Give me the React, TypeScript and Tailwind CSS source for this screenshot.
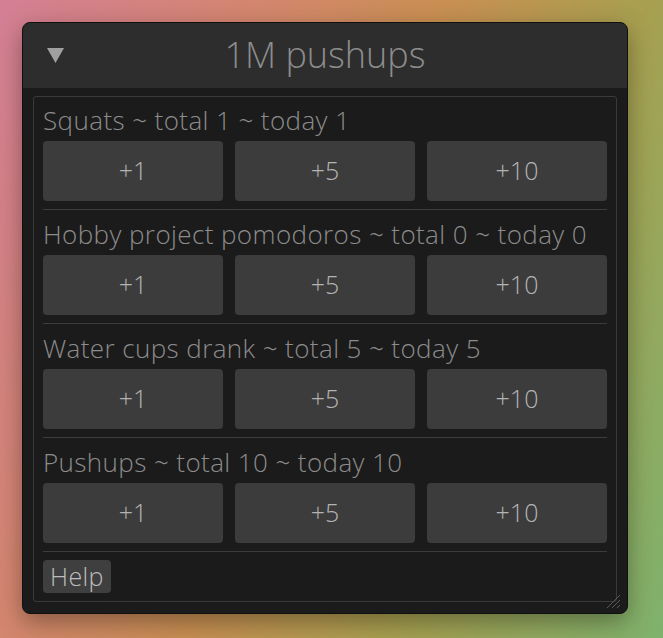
import { Fragment } from 'react';

const counters = [
  { name: 'Squats', total: 1, today: 1 },
  { name: 'Hobby project pomodoros', total: 0, today: 0 },
  { name: 'Water cups drank', total: 5, today: 5 },
  { name: 'Pushups', total: 10, today: 10 },
];

const steps = [1, 5, 10];

function CounterRow({ name, total, today }: { name: string; total: number; today: number }) {
  return (
    <div className="flex flex-col">
      <div className="h-[29px] pt-[2px] text-[26px] leading-[29px] tracking-[0.4px] text-[#8c8c8c] whitespace-nowrap">
        {name} ~ total {total} ~ today {today}
      </div>
      <div className="mt-2 grid grid-cols-3 gap-3">
        {steps.map((s) => (
          <button
            key={s}
            className="h-[60px] rounded-[4px] bg-[#3c3c3c] text-[25px] text-[#b4b4b4] flex items-center justify-center"
          >
            +{s}
          </button>
        ))}
      </div>
    </div>
  );
}

export default function App() {
  return (
    <div
      className="w-[663px] h-[638px] overflow-hidden pt-[22px] pl-[22px] bg-[linear-gradient(112deg,#d47f95_0%,#d4866f_28%,#c98f52_48%,#a89f4f_70%,#7fb26d_100%)]"
      style={{ fontFamily: '"Open Sans", "Noto Sans", sans-serif' }}
    >
      <div className="relative w-[606px] h-[592px] rounded-[8px] bg-[#1b1b1b] border border-[#101010] shadow-[0_8px_24px_rgba(0,0,0,0.35)] flex flex-col overflow-hidden font-light">
        {/* title bar */}
        <div className="relative h-[65px] shrink-0 bg-[#2d2d2d] flex items-center justify-center">
          <svg className="absolute left-[24px] top-[25px]" width="17" height="15" viewBox="0 0 17 15">
            <polygon points="0,0 17,0 8.5,15" fill="#a0a0a0" />
          </svg>
          <span className="text-[36px] leading-none text-[#8c8c8c] -mt-[2px]">1M pushups</span>
        </div>

        {/* body */}
        <div className="flex-1 pt-[8px] pl-[10px] pr-[10px] pb-[11px]">
          <div className="h-full rounded-[3px] border border-[#3a3a3a] pt-[7px] px-[9px] flex flex-col">
            {counters.map((c) => (
              <Fragment key={c.name}>
                <CounterRow {...c} />
                <div className="my-2 h-px bg-[#3c3c3c]" />
              </Fragment>
            ))}
            <div>
              <button className="h-[33px] px-[7px] rounded-[4px] bg-[#3f3f3f] text-[25px] leading-none tracking-[0.4px] text-[#bdbdbd]">
                Help
              </button>
            </div>
          </div>
        </div>

        {/* resize grip */}
        <svg className="absolute right-[6px] bottom-[4px]" width="16" height="16" viewBox="0 0 16 16">
          <line x1="2" y1="15" x2="15" y2="2" stroke="#5a5a5a" strokeWidth="1" />
          <line x1="7" y1="15" x2="15" y2="7" stroke="#5a5a5a" strokeWidth="1" />
          <line x1="12" y1="15" x2="15" y2="12" stroke="#5a5a5a" strokeWidth="1" />
        </svg>
      </div>
    </div>
  );
}
